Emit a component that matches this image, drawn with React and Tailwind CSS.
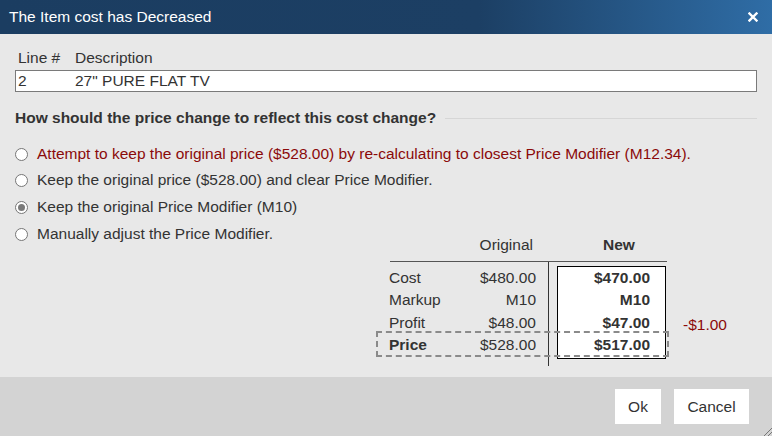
import React from "react";

function Radio({ checked }) {
  return (
    <span className="w-[13px] h-[13px] rounded-full border border-[#767676] bg-white flex items-center justify-center shrink-0">
      {checked && <span className="w-[7px] h-[7px] rounded-full bg-[#7a7a7a]" />}
    </span>
  );
}

function Option({ text, red, checked, className = "" }) {
  return (
    <div className={`flex items-center h-[18px] ${className}`}>
      <Radio checked={checked} />
      <span className={`ml-[9px] whitespace-nowrap ${red ? "text-[#8b0a0a]" : "text-[#333]"}`}>{text}</span>
    </div>
  );
}

export default function App() {
  const rows = [
    { label: "Cost", orig: "$480.00", nw: "$470.00" },
    { label: "Markup", orig: "M10", nw: "M10" },
    { label: "Profit", orig: "$48.00", nw: "$47.00" },
    { label: "Price", orig: "$528.00", nw: "$517.00", bold: true },
  ];
  return (
    <div className="w-[772px] h-[436px] flex flex-col bg-[#e8e8e8] text-[15.5px] leading-[18px] text-[#333] font-['Liberation_Sans',Arial,sans-serif] overflow-hidden relative">
      <div className="h-[34px] shrink-0 flex items-center justify-between pl-[9px] pr-[14px] text-white bg-[linear-gradient(to_right,#1b3d61_0%,#1c3f64_62%,#2f6da6_100%)]">
        <span>The Item cost has Decreased</span>
        <svg width="10" height="10" viewBox="0 0 10 10">
          <path d="M1.5 1.5 L8.5 8.5 M8.5 1.5 L1.5 8.5" stroke="white" strokeWidth="2.4" strokeLinecap="square" />
        </svg>
      </div>

      <div className="flex-1 px-[15px] pt-[15px]">
        <div className="flex pl-[3px]">
          <span className="w-[57px]">Line #</span>
          <span>Description</span>
        </div>
        <div className="mt-[3px] h-[22px] border border-[#7a7a7a] bg-white flex items-center pl-[2px] w-[742px]">
          <span className="w-[57px]">2</span>
          <span>27" PURE FLAT TV</span>
        </div>

        <div className="mt-[17px] flex items-center">
          <span className="font-bold whitespace-nowrap">How should the price change to reflect this cost change?</span>
          <span className="flex-1 ml-[9px] h-px bg-[#d6d6d6] mr-0" />
        </div>

        <Option className="mt-[18px]" red text="Attempt to keep the original price ($528.00) by re-calculating to closest Price Modifier (M12.34)." />
        <Option className="mt-[8px]" text="Keep the original price ($528.00) and clear Price Modifier." />
        <Option className="mt-[9px]" checked text="Keep the original Price Modifier (M10)" />

        <div className="mt-[9px] flex items-start">
          <div className="w-[361px]">
            <Option text="Manually adjust the Price Modifier." />
          </div>
          <div className="relative w-[293px] mt-[3px]">
            <div className="ml-[14px] w-[277px] h-[34px] border-b border-[#555] flex items-center">
              <span className="w-[145px] text-right pr-[2px]">Original</span>
              <span className="pl-[68px] font-bold">New</span>
            </div>
            <div className="flex items-start">
              <div className="w-[173px] border-r border-[#333] pt-[5px] pb-[10px]">
                {rows.map((r) => (
                  <div key={r.label} className="h-[22.3px] flex items-center justify-between pl-[13px] pr-[12px]">
                    <span className={r.bold ? "font-bold" : ""}>{r.label}</span>
                    <span>{r.orig}</span>
                  </div>
                ))}
              </div>
              <div className="ml-[8px] mt-[4px] w-[109px] border border-black bg-white pb-[2px]">
                {rows.map((r) => (
                  <div key={r.label} className="h-[22.3px] flex items-center justify-end pr-[15px] font-bold">
                    {r.nw}
                  </div>
                ))}
              </div>
            </div>
            <div className="absolute left-0 top-[103px] w-[293px] h-[26px] border-2 border-dashed border-[#8a8a8a]" />
          </div>
          <span className="ml-[14px] mt-[91px] text-[#8b0a0a]">-$1.00</span>
        </div>
      </div>

      <div className="h-[59px] shrink-0 bg-[#d3d3d3] flex justify-end items-start pt-[12px] pr-[23px] gap-[13px]">
        <button className="w-[46px] h-[35px] bg-white text-[#333]">Ok</button>
        <button className="w-[75px] h-[35px] bg-white text-[#333]">Cancel</button>
      </div>

      <svg className="absolute right-0 bottom-0" width="12" height="12" viewBox="0 0 12 12">
        <path d="M4 12 L12 4 M8 12 L12 8" stroke="#777" strokeWidth="1" />
      </svg>
    </div>
  );
}
